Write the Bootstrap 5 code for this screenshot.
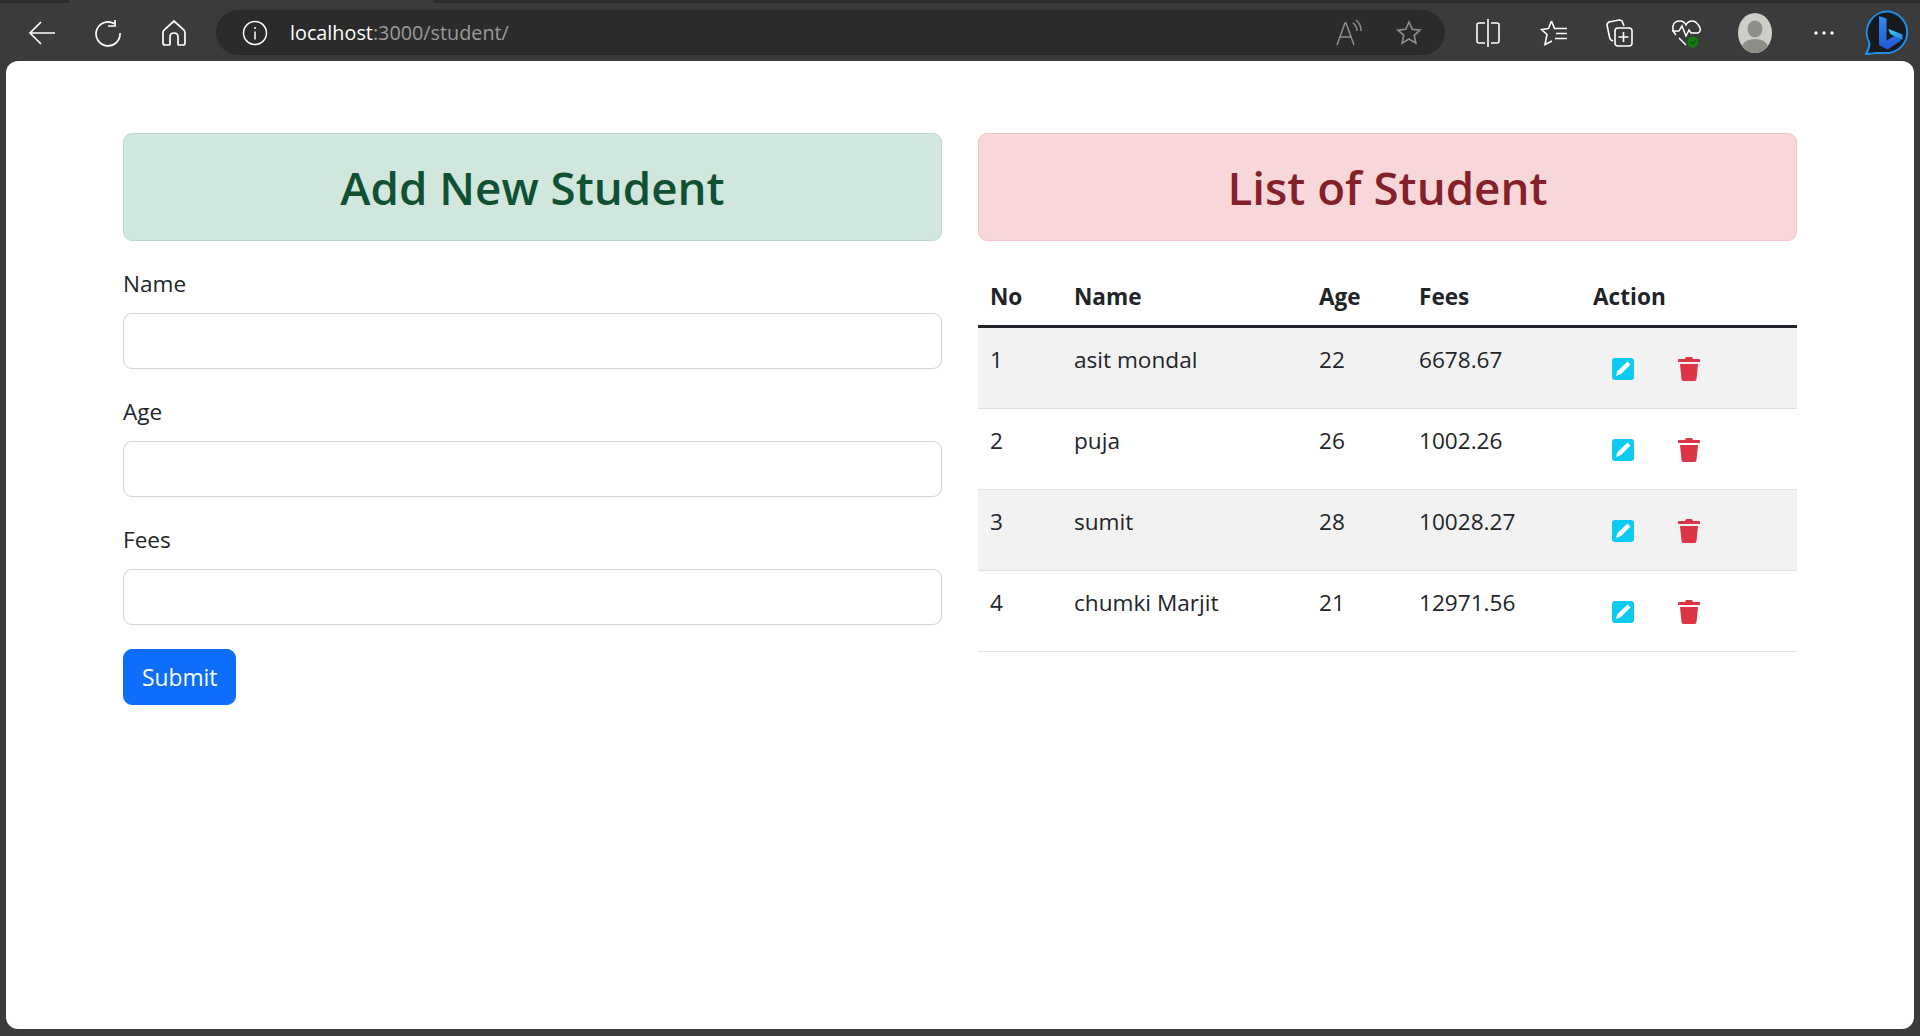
<!DOCTYPE html>
<html lang="en">
<head>
    <meta charset="UTF-8">
    <meta name="viewport" content="width=device-width, initial-scale=1.0">
    <title>Student</title>
    <link href="https://cdn.jsdelivr.net/npm/bootstrap@5.3.2/dist/css/bootstrap.min.css" rel="stylesheet">
    <style>
        html { font-size: 24px; }
        html, body { height: 100%; overflow: hidden; }
        body {
            background-color: #3b3b3b;
            font-family: "Open Sans", "Liberation Sans", sans-serif;
            font-size: 22.6px;
            line-height: 36px;
            color: #212529;
        }
        .tab-strip { height: 3px; background-color: #2b2b2b; }
        .tab-active { width: 364px; margin-left: 69px; background-color: #3b3b3b; }
        .browser-bar { height: 58px; padding: 7px 0 6px 9px; }
        .bar-slot { width: 66px; height: 45px; }
        .bar-slot-avatar { width: 71px; }
        .bar-slot-more { width: 68px; }
        .bar-slot-bing { width: 58px; padding-left: 3px; }
        .bar-slot svg { display: block; }
        .address-bar {
            width: 1229px;
            height: 45px;
            margin-left: 9px;
            margin-right: 10px;
            padding-left: 26px;
            padding-right: 6px;
            background-color: #2b2b2b;
            border-radius: 23px;
            font-size: 19.8px;
            line-height: 1;
        }
        .address-host { color: #fff; margin-left: 22px; }
        .address-path { color: #9a9a9a; }
        .address-slot { width: 60px; height: 45px; }
        .page-panel {
            height: 968px;
            margin: 0 6px;
            padding-top: 72px;
            background-color: #fff;
            border-radius: 12px;
            overflow: hidden;
        }
        .container { max-width: 1710px; }
        .alert-success { --bs-alert-color: #0f5132; --bs-alert-bg: #d1e7dd; --bs-alert-border-color: #badbcc; }
        .alert-danger { --bs-alert-color: #842029; --bs-alert-bg: #f8d7da; --bs-alert-border-color: #f5c2c7; }
        .table-title { font-size: 45.7px; line-height: 57.6px; font-weight: 600; padding-top: 1px; margin-bottom: -1px !important; }
        .form-label { padding-top: 1px; margin-bottom: 11px; }
        .form-control { border-color: #ced4da; }
        .btn-primary { --bs-btn-font-size: 22.8px; --bs-btn-line-height: 36px; padding-top: 10px; padding-bottom: 8px; }
        .student-table thead th { border-bottom: 3px solid #212529; padding-top: 14px; padding-bottom: 10px; }
        .student-table td:not(:last-child) { padding-top: 14px; padding-bottom: 10px; }
        .col-no { width: 84px; }
        .col-name { width: 245px; }
        .col-age { width: 100px; }
        .col-fees { width: 174px; }
        .row-btn { height: 56px; padding-top: 11px; }
        .icon-edit { width: 22px; height: 22px; }
        .icon-trash { width: 22px; height: 24px; }
    </style>
</head>
<body>
    <div class="tab-strip d-flex"><div class="tab-active"></div></div>
    <div class="browser-bar d-flex align-items-center">
        <div class="bar-slot d-flex align-items-center justify-content-center">
            <svg width="28" height="28" viewBox="0 0 28 28" fill="none" stroke="#fff" stroke-width="1.7"><path d="M27 14H2M13 3 2 14l11 11"/></svg>
        </div>
        <div class="bar-slot d-flex align-items-center justify-content-center">
            <svg width="28" height="28" viewBox="0 0 28 28" fill="none" stroke="#fff" stroke-width="1.7"><path d="M20 4.500A12 12 0 1 0 26 14M21 1v6h-7"/></svg>
        </div>
        <div class="bar-slot d-flex align-items-center justify-content-center">
            <svg width="26" height="28" viewBox="0 0 26 28" fill="none" stroke="#fff" stroke-width="1.7"><path d="M13 2 3 11q-1 1-1 3v10q0 2 2 2h4q1 0 1-1v-7q0-4 4-4t4 4v7q0 1 1 1h4q2 0 2-2V14q0-2-1-3z"/></svg>
        </div>
        <div class="address-bar d-flex align-items-center">
            <svg width="26" height="26" viewBox="0 0 26 26" fill="none" stroke="#fff" stroke-width="1.5"><circle cx="13" cy="13" r="11.500"/><path d="M13 11.500v8M13 7v2"/></svg>
            <span class="address-host">localhost<span class="address-path">:3000/student/</span></span>
            <div class="ms-auto d-flex">
                <div class="address-slot d-flex align-items-center justify-content-center">
                    <svg width="26" height="28" viewBox="0 0 26 28" fill="none" stroke="#8f8f8f" stroke-width="1.5"><path d="M1 26 9 4h1l8 22M4 18h11M17 4q4 3 4 8M20 1q5 4 5 11"/></svg>
                </div>
                <div class="address-slot d-flex align-items-center justify-content-center">
                    <svg width="26" height="26" viewBox="0 0 26 26" fill="none" stroke="#8f8f8f" stroke-width="1.6"><path d="m13 2 3.300 7.300 7.700.800-5.800 5.200 1.700 7.800L13 19l-6.900 4.100 1.700-7.800L2 10.100l7.700-.800z"/></svg>
                </div>
            </div>
        </div>
        <div class="bar-slot d-flex align-items-center justify-content-center">
            <svg width="24" height="30" viewBox="0 0 24 30" fill="none" stroke="#fff" stroke-width="1.6"><path d="M12 1v28M9 5H3Q1 5 1 7v16q0 2 2 2h6M15 5h6q2 0 2 2v16q0 2-2 2h-6"/></svg>
        </div>
        <div class="bar-slot d-flex align-items-center justify-content-center">
            <svg width="28" height="30" viewBox="0 0 28 30" fill="none" stroke="#fff" stroke-width="1.6"><path d="M11.500 3 8.500 10.500 1.500 11.500l5.500 5-2 10 7-3.500M11.500 3l3 7.500 12.500 0M16 15.500h11M15 20.500h12"/></svg>
        </div>
        <div class="bar-slot d-flex align-items-center justify-content-center">
            <svg width="28" height="30" viewBox="0 0 28 30" fill="none" stroke="#fff" stroke-width="1.6"><path d="M7 23 5 22q-1-1-1.500-3L1 7q0-2 2-3l10-2q2 0 3 1l2 5"/><rect x="9" y="10" width="17" height="18" rx="3"/><path d="M17.500 14v10M12.500 19h10"/></svg>
        </div>
        <div class="bar-slot d-flex align-items-center justify-content-center">
            <svg width="30" height="30" viewBox="0 0 30 30" fill="none"><path d="M5 17Q1 13 2 8t7-5q4 0 6 4 2-4 6-4t7 5-1 7M1 13h7l3-5 4 10 3-6 2 3h7M8 20l7 7" stroke="#fff" stroke-width="1.500"/><circle cx="22" cy="24" r="5.500" fill="#107c10"/><path d="m19.500 24 2 2 3-3.500" stroke="#0b4d0b" stroke-width="1.200"/></svg>
        </div>
        <div class="bar-slot bar-slot-avatar d-flex align-items-center justify-content-center">
            <svg width="34" height="42" viewBox="0 0 34 42"><ellipse cx="17" cy="21" rx="17" ry="20" fill="#cfcdc8"/><ellipse cx="17" cy="17" rx="7.500" ry="8.500" fill="#8f8d88"/><path d="M4 34q3-7 13-7t13 7q-5 7-13 7T4 34z" fill="#8f8d88"/></svg>
        </div>
        <div class="bar-slot bar-slot-more d-flex align-items-center justify-content-center">
            <svg width="22" height="6" viewBox="0 0 22 6" fill="#fff"><circle cx="3" cy="3" r="1.700"/><circle cx="11" cy="3" r="1.700"/><circle cx="19" cy="3" r="1.700"/></svg>
        </div>
        <div class="bar-slot bar-slot-bing d-flex align-items-center justify-content-center">
            <svg width="49" height="45" viewBox="0 0 49 45" fill="none">
                <defs>
                    <linearGradient id="bingStem" x1="0" y1="0" x2="0" y2="1"><stop offset="0" stop-color="#2f8cf0"/><stop offset="1" stop-color="#2456d8"/></linearGradient>
                    <linearGradient id="bingBowl" x1="0" y1="0" x2="1" y2="1"><stop offset="0" stop-color="#35d6ea"/><stop offset="1" stop-color="#2a7de8"/></linearGradient>
                </defs>
                <path d="M25 1.500a21.500 21 0 0 1 0 41.500H12c-4 0-7 1.500-10 1 2-3 3.500-6 3.500-11A21 21 0 0 1 25 1.500z" fill="#16191d" stroke="#1d8fe6" stroke-width="2"/>
                <path d="M15 6l7.500 2.500v22l8-4.500-4-2-2-5 12 5v7l-13 8.500-8.500-4.500z" fill="url(#bingStem)"/>
                <path d="M24.500 19l14 5.500v5.500l-8-4-4-2z" fill="url(#bingBowl)"/>
            </svg>
        </div>
    </div>

    <div class="page-panel">
        <div class="container">
            <div class="row">
                <div class="col-6">
                    <div class="alert alert-success text-center">
                        <h2 class="mb-0 table-title">Add New Student</h2>
                    </div>
                    <form>
                        <div class="mb-3">
                            <label for="studentName" class="form-label">Name</label>
                            <input type="text" class="form-control" id="studentName">
                        </div>
                        <div class="mb-3">
                            <label for="studentAge" class="form-label">Age</label>
                            <input type="text" class="form-control" id="studentAge">
                        </div>
                        <div class="mb-3">
                            <label for="studentFees" class="form-label">Fees</label>
                            <input type="text" class="form-control" id="studentFees">
                        </div>
                        <button type="button" class="btn btn-primary">Submit</button>
                    </form>
                </div>
                <div class="col-6">
                    <div class="alert alert-danger text-center">
                        <h2 class="mb-0 table-title">List of Student</h2>
                    </div>
                    <table class="table table-striped student-table">
                        <thead>
                            <tr>
                                <th class="col-no">No</th>
                                <th class="col-name">Name</th>
                                <th class="col-age">Age</th>
                                <th class="col-fees">Fees</th>
                                <th>Action</th>
                            </tr>
                        </thead>
                        <tbody id="studentRows"></tbody>
                    </table>
                </div>
            </div>
        </div>
    </div>

    <script src="https://cdn.jsdelivr.net/npm/bootstrap@5.3.2/dist/js/bootstrap.bundle.min.js"></script>
    <script>
        (function() {
            const students = [
                { name: 'asit mondal', age: 22, fees: '6678.67' },
                { name: 'puja', age: 26, fees: '1002.26' },
                { name: 'sumit', age: 28, fees: '10028.27' },
                { name: 'chumki Marjit', age: 21, fees: '12971.56' }
            ];
            const editIcon = '<svg class="icon-edit d-block" viewBox="0 0 22 22"><rect width="22" height="22" rx="3" fill="#0dcaf0"/><path d="M15.500 3.500 18.500 6.500 9 16l-5 2 1.500-5z" fill="#fff"/></svg>';
            const trashIcon = '<svg class="icon-trash d-block" viewBox="0 0 22 24"><path d="M8 0h6l1 2h6q1 0 1 1v2H0V3q0-1 1-1h6z" fill="#dc3545"/><path d="M2 7h18l-1.500 15q0 2-2 2h-11q-2 0-2-2z" fill="#dc3545"/></svg>';
            const rows = document.getElementById('studentRows');
            students.forEach((s, i) => {
                const tr = document.createElement('tr');
                tr.innerHTML = `<td>${i + 1}</td><td>${s.name}</td><td>${s.age}</td><td>${s.fees}</td>` +
                    `<td><div class="d-flex gap-1"><button type="button" class="btn row-btn">${editIcon}</button><button type="button" class="btn row-btn">${trashIcon}</button></div></td>`;
                rows.appendChild(tr);
            });
        })();
    </script>
</body>
</html>
